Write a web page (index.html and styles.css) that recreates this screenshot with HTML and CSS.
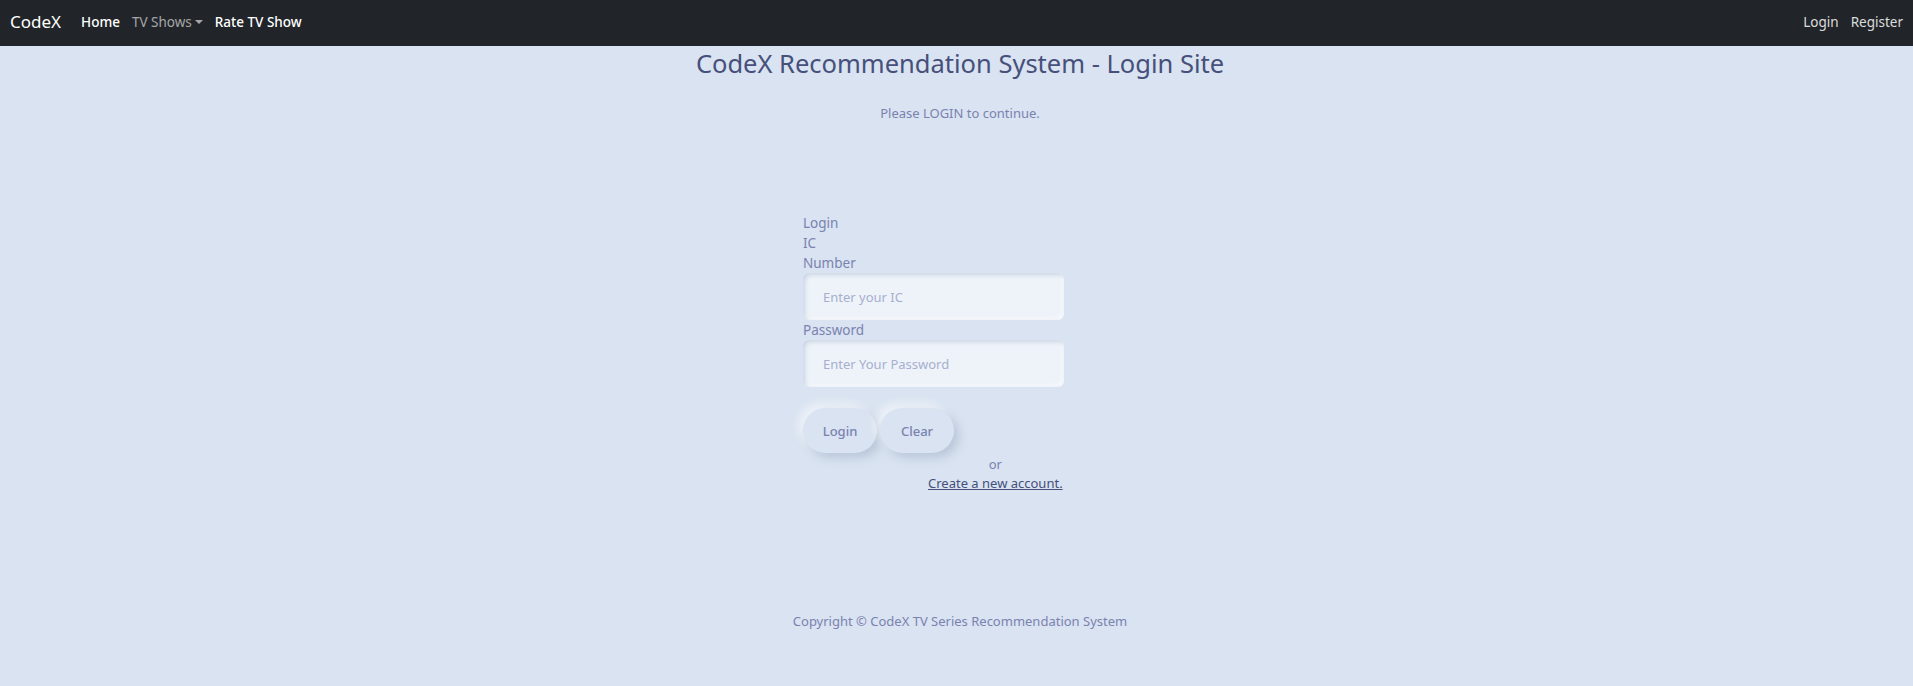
FILE: index.html
```html
<!DOCTYPE html>
<html lang="en">
<head>
<meta charset="utf-8">
<title>CodeX - Login</title>
<link rel="stylesheet" href="styles.css">
</head>
<body>
<nav class="navbar">
  <div class="nav-left">
    <a class="brand" href="#">CodeX</a>
    <a class="nav-link active" href="#">Home</a>
    <a class="nav-link muted dropdown" href="#">TV Shows<span class="caret"></span></a>
    <a class="nav-link active" href="#">Rate TV Show</a>
  </div>
  <div class="nav-right">
    <a class="nav-link light" href="#">Login</a>
    <a class="nav-link light" href="#">Register</a>
  </div>
</nav>
<main class="main">
  <h2 class="title">CodeX Recommendation System - Login Site</h2>
  <p class="lead-text">Please LOGIN to continue.</p>
  <form class="login-form">
    <label class="label label-narrow" for="ic">Login IC Number</label>
    <input class="field" id="ic" type="text" placeholder="Enter your IC">
    <label class="label" for="pw">Password</label>
    <input class="field" id="pw" type="password" placeholder="Enter Your Password">
    <div class="buttons">
      <button class="btn" type="button">Login</button>
      <button class="btn" type="button">Clear</button>
    </div>
    <div class="alt">
      <span class="or">or</span>
      <a class="create" href="#">Create a new account.</a>
    </div>
  </form>
</main>
<footer class="footer">Copyright © CodeX TV Series Recommendation System</footer>
</body>
</html>
```
FILE: styles.css
```css
* { box-sizing: border-box; }
html, body { margin: 0; padding: 0; }
body {
  background: #d9e3f1;
  font-family: "Noto Sans", "Open Sans", sans-serif;
  color: #7a82b0;
  height: 686px;
  overflow: hidden;
}
.navbar {
  height: 46px;
  background: #212529;
  display: flex;
  align-items: center;
  justify-content: space-between;
  padding: 0 4px 3px 10px;
}
.nav-left, .nav-right { display: flex; align-items: center; }
.brand {
  color: #ffffff;
  font-size: 17px;
  text-decoration: none;
  margin-right: 14px;
}
.nav-link {
  font-size: 13.5px;
  text-decoration: none;
  padding: 0 6px;
  color: #ffffff;
  font-weight: 500;
}
.nav-link.muted { color: rgba(255,255,255,0.6); font-weight: 400; }
.nav-link.light { color: rgba(255,255,255,0.85); font-weight: 400; }
.caret {
  display: inline-block;
  margin-left: 3px;
  vertical-align: 3px;
  border-top: 4px solid rgba(255,255,255,0.6);
  border-left: 4px solid transparent;
  border-right: 4px solid transparent;
}
.main { display: flex; flex-direction: column; align-items: center; padding-left: 7px; }
.title {
  margin: 0;
  font-size: 25.5px;
  font-weight: 400;
  color: #46507a;
}
.lead-text { margin: 24px 0 0; font-size: 13px; }
.login-form {
  width: 314px;
  margin-top: 91px;
  display: flex;
  flex-direction: column;
  align-items: flex-start;
}
.label { font-size: 13.5px; line-height: 20px; color: #7a82b0; }
.label-narrow { width: 50px; }
.field {
  width: 261px;
  height: 47px;
  border: none;
  border-radius: 6px;
  background: #eef3f9;
  padding: 0 20px;
  font-family: inherit;
  font-size: 13px;
  color: #7a82b0;
  box-shadow: inset 2px 2px 4px rgba(160,175,205,0.45), inset -2px -2px 4px rgba(255,255,255,0.6);
  outline: none;
}
.field::placeholder { color: #a7afd0; }
.buttons { display: flex; gap: 3px; margin-top: 21px; }
.btn {
  width: 74px;
  height: 45px;
  border: none;
  border-radius: 23px;
  background: #d9e3f1;
  color: #7a82b0;
  font-family: inherit;
  font-size: 13px;
  font-weight: 500;
  box-shadow: 5px 5px 10px rgba(163,177,198,0.55), -5px -5px 10px rgba(255,255,255,0.55);
}
.alt {
  align-self: flex-start;
  margin-left: 125px;
  margin-top: 2px;
  display: flex;
  flex-direction: column;
  align-items: center;
  font-size: 13px;
  line-height: 19px;
}
.create { color: #46507a; text-decoration: underline; }
.footer {
  text-align: center;
  padding-left: 7px;
  margin-top: 119px;
  font-size: 13px;
}
```
